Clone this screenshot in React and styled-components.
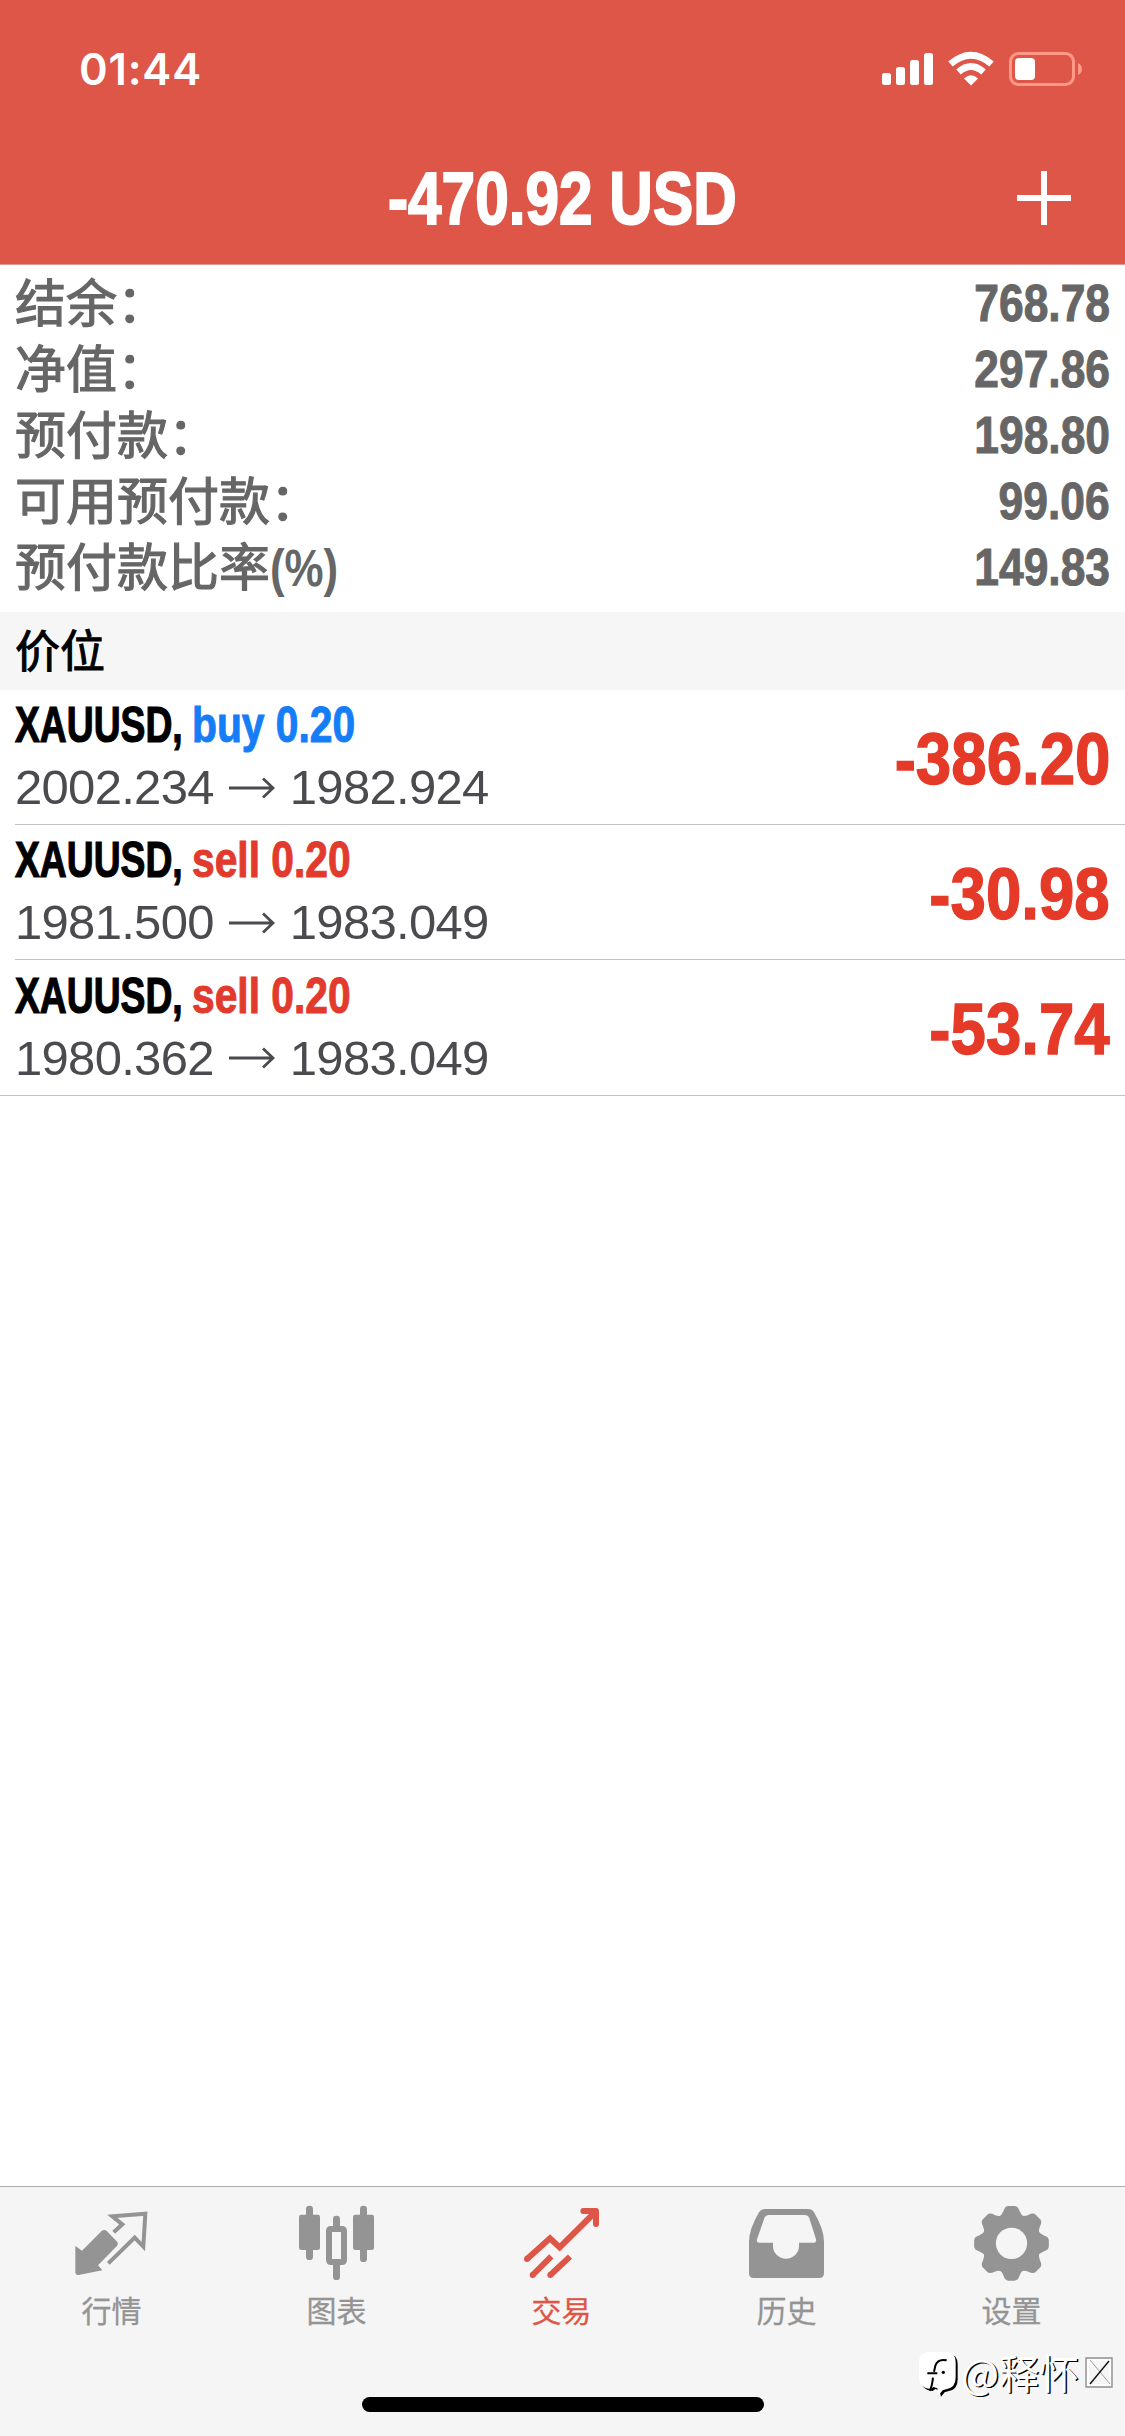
import React from "react";
import styled, { createGlobalStyle } from "styled-components";

const GlobalStyle = createGlobalStyle`
    body {
        margin: 0;
        background-color: #fff;
    }
    * {
        box-sizing: border-box;
    }
`;

const sans = `"Liberation Sans", "Noto Sans CJK SC", sans-serif`;

const Screen = styled.div`
    display: flex;
    flex-direction: column;
    position: relative;
    width: 1125px;
    height: 2436px;
    overflow: hidden;
    background-color: #fff;
    font-family: ${sans};
`;

const Header = styled.header`
    display: flex;
    flex-direction: column;
    height: 265px;
    background-color: #dd5648;
    border-bottom: 1px solid #dc9a96;
    color: #fff;
`;

const StatusBar = styled.div`
    display: flex;
    justify-content: space-between;
    align-items: center;
    height: 138px;
    padding: 0 42px 0 79px;
`;

const Time = styled.span`
    font-family: Inter, sans-serif;
    font-size: 43.5px;
    font-weight: 600;
    line-height: 60px;
    letter-spacing: 0.8px;
`;

const StatusIcons = styled.svg`
    width: 202px;
    height: 38px;
`;

const TitleBar = styled.div`
    display: grid;
    grid-template-columns: 1fr auto 1fr;
    align-items: center;
    height: 120px;
    padding: 0 54px;
`;

// horizontally squeezed text, stands in for a condensed face
const Condensed = styled.span`
    display: inline-block;
    font-weight: 700;
    white-space: nowrap;
    transform: scaleX(${(props) => props.$scale});
    transform-origin: ${(props) => props.$origin || "left"} center;
    -webkit-text-stroke: ${(props) => props.$stroke || "1px"} currentColor;
`;

const Title = styled(Condensed)`
    grid-column: 2;
    padding-top: 2px;
    font-size: 74.5px;
    line-height: 86px;
`;

const PlusIcon = styled.svg`
    justify-self: end;
    width: 54px;
    height: 54px;
`;

const Summary = styled.section`
    display: flex;
    flex-direction: column;
    height: 347px;
    padding: 6px 15px 0;
    color: #666;
`;

const SummaryRow = styled.div`
    display: flex;
    justify-content: space-between;
    align-items: center;
    height: 66px;
`;

const Label = styled.span`
    padding-top: 2px;
    font-size: 51px;
    line-height: 66px;
    white-space: nowrap;
    -webkit-text-stroke: 1.2px currentColor;
`;

const Amount = styled(Condensed)`
    font-size: 51px;
    line-height: 66px;
`;

const SectionTitle = styled.div`
    display: flex;
    align-items: center;
    height: 78px;
    padding: 4px 15px 0;
    background-color: #f6f6f6;
    color: #000;
    font-size: 45px;
    line-height: 74px;
    -webkit-text-stroke: 1px currentColor;
`;

const Positions = styled.div`
    display: flex;
    flex-direction: column;
    border-bottom: 1px solid #c2c2c5;
`;

const Position = styled.div`
    display: flex;
    justify-content: space-between;
    align-items: center;
    height: 135px;
    margin-left: 15px;
    padding-right: 15px;
    border-bottom: ${(props) => (props.$last ? "none" : "1px solid #c2c2c5")};
`;

const Details = styled.div`
    display: flex;
    flex-direction: column;
`;

const Deal = styled.div`
    display: flex;
    height: 63px;
    font-size: 50px;
    line-height: 62px;
`;

const Symbol = styled.div`
    width: 177px;
    color: #000;
`;

const Side = styled.div`
    color: ${(props) => (props.$side === "buy" ? "#157df6" : "#e23a2c")};
`;

const Prices = styled.div`
    display: flex;
    align-items: center;
    height: 63px;
    padding-bottom: 2px;
    color: #4b4b4f;
    font-size: 49px;
    line-height: 61px;
    letter-spacing: -0.7px;
`;

const Arrow = styled.svg`
    width: 46px;
    height: 22px;
    margin: 0 15px 0 15px;
`;

const Profit = styled(Condensed)`
    padding-top: 3px;
    color: #e63a29;
    font-size: 71.5px;
    line-height: 80px;
`;

const Spacer = styled.div`
    flex: 1;
`;

const TabBar = styled.nav`
    display: flex;
    height: 250px;
    border-top: 1px solid #adadad;
    background-color: #f5f5f5;
`;

const Tab = styled.div`
    display: flex;
    flex: 1;
    flex-direction: column;
    align-items: center;
    padding-top: 19px;
    color: ${(props) => (props.$active ? "#dd5648" : "#949494")};
`;

const TabIcon = styled.svg`
    width: 75px;
    height: 75px;
    overflow: visible;
`;

const TabLabel = styled.span`
    margin-top: 8px;
    padding-right: 2px;
    font-size: 30px;
    line-height: 46px;
    -webkit-text-stroke: 0.3px currentColor;
`;

const HomeIndicator = styled.div`
    position: absolute;
    left: 362px;
    bottom: 24px;
    width: 402px;
    height: 15px;
    border-radius: 8px;
    background-color: #000;
`;

const Watermark = styled.div`
    position: absolute;
    right: 10px;
    bottom: 36px;
    display: flex;
    align-items: center;
    height: 50px;
    color: #fff;
    font-family: "Noto Sans CJK SC", sans-serif;
    font-size: 40px;
    line-height: 50px;
    text-shadow: 1.5px 1px 0 #000;
`;

const WatermarkText = styled.span`
    padding-bottom: 6px;
`;

const WatermarkLogo = styled.svg`
    width: 44px;
    height: 48px;
    margin-right: -1px;
`;

const MissingGlyph = styled.svg`
    width: 31px;
    height: 34px;
    margin: 0 0 4px 5px;
`;

const summary = [
    { label: "结余：", value: "768.78" },
    { label: "净值：", value: "297.86" },
    { label: "预付款：", value: "198.80" },
    { label: "可用预付款：", value: "99.06" },
    { label: "预付款比率", suffix: "(%)", value: "149.83" },
];

const positions = [
    { side: "buy", open: "2002.234", current: "1982.924", profit: "-386.20" },
    { side: "sell", open: "1981.500", current: "1983.049", profit: "-30.98" },
    { side: "sell", open: "1980.362", current: "1983.049", profit: "-53.74" },
];

const QuotesIcon = () => (
    <TabIcon viewBox="225 108 225 225" fill="currentColor">
        <path d="M226 228 L246 242 L305 183 Q313 177 321 184 L350 214 Q357 221 350 229 L294 286 L307 301 L236 315 Q226 316 226 306 Z" />
        <path
            d="M341 187 L367 163 L337 139 L436 131 L430 230 L404 203 L325 280"
            fill="none"
            stroke="currentColor"
            strokeWidth="12"
        />
    </TabIcon>
);

const ChartIcon = () => (
    <TabIcon viewBox="900 108 225 225" fill="currentColor">
        <rect x="918" y="107" width="21" height="163" rx="10" />
        <rect x="897" y="134" width="63" height="106" rx="7" />
        <rect x="999" y="137" width="21" height="50" rx="10" />
        <rect x="999" y="262" width="21" height="68" rx="10" />
        <rect
            x="987"
            y="177"
            width="45"
            height="99"
            rx="5"
            fill="#f5f5f5"
            stroke="currentColor"
            strokeWidth="18"
        />
        <rect x="1080" y="107" width="21" height="169" rx="10" />
        <rect x="1059" y="134" width="63" height="106" rx="7" />
    </TabIcon>
);

const TradeIcon = () => (
    <TabIcon
        viewBox="315 108 225 225"
        fill="none"
        stroke="currentColor"
        strokeWidth="18"
    >
        <path d="M321 267 L390 205 L419 232 L526 126" />
        <path
            d="M490 123 H528 V162"
            strokeLinecap="round"
            strokeLinejoin="round"
        />
        <path d="M338 315 L394 259 M391 315 L450 260" />
        <g fill="currentColor" stroke="none">
            <circle cx="321" cy="267" r="9" />
            <circle cx="338" cy="315" r="9" />
            <circle cx="391" cy="315" r="9" />
        </g>
    </TabIcon>
);

const HistoryIcon = () => (
    <TabIcon viewBox="990 108 225 225" fill="currentColor">
        <path
            fillRule="evenodd"
            d="M1035 117 H1164 Q1176 117 1182 127 Q1212 178 1212 215 V310 Q1212 324 1198 324 H1001 Q987 324 987 310 V215 Q987 178 1017 127 Q1023 117 1035 117 Z
            M1047 135 Q1037 135 1033 145 L1011 208 Q1009 218 1018 218 H1059 V228 A39 38 0 0 0 1137 228 V218 H1181 Q1190 218 1188 208 L1168 145 Q1164 135 1154 135 Z"
        />
    </TabIcon>
);

const SettingsIcon = () => (
    <TabIcon viewBox="450 108 225 225">
        <g fill="currentColor">
            <circle cx="559.5" cy="220" r="89" />
            {[0, 45, 90, 135, 180, 225, 270, 315].map((angle) => (
                <path
                    key={angle}
                    transform={`rotate(${angle} 559.5 220)`}
                    d="M519 142 Q531 136 535 124 Q540 108 550 108 H569 Q579 108 584 124 Q588 136 600 142 Z"
                />
            ))}
        </g>
        <circle cx="559.5" cy="220" r="47" fill="#f5f5f5" />
    </TabIcon>
);

const tabs = [
    { label: "行情", icon: QuotesIcon },
    { label: "图表", icon: ChartIcon },
    { label: "交易", icon: TradeIcon, active: true },
    { label: "历史", icon: HistoryIcon },
    { label: "设置", icon: SettingsIcon },
];

const bubble =
    "M54 41 H106 Q135 41 135 72 V118 Q135 148 106 153 L96 156 L85 169 L80 150 L68 146 L60 152 Q25 148 25 118 V72 Q25 41 54 41 Z";

const App = () => {
    return (
        <>
            <GlobalStyle />
            <Screen>
                <Header>
                    <StatusBar>
                        <Time>01:44</Time>
                        <StatusIcons viewBox="881 50 202 38" fill="#fff">
                            <rect x="882" y="73" width="9" height="12" rx="2.5" />
                            <rect x="896" y="67" width="9" height="18" rx="2.5" />
                            <rect x="910" y="60" width="9" height="25" rx="2.5" />
                            <rect x="924" y="53" width="9" height="32" rx="2.5" />
                            <path d="M964 78.5 Q971 72 978 78.5 L971 85.5 Z" />
                            <path
                                d="M950.5 64 Q971 46.5 991.5 64 M958.5 72 Q971 61 983.5 72"
                                fill="none"
                                stroke="#fff"
                                strokeWidth="6.8"
                            />
                            <rect
                                x="1010.5"
                                y="53.5"
                                width="63"
                                height="31"
                                rx="8"
                                fill="none"
                                stroke="#ff9887"
                                strokeWidth="3"
                            />
                            <rect x="1015" y="58" width="20" height="22" rx="4" />
                            <path d="M1078 63 Q1082 65 1082 69 Q1082 73 1078 75 Z" fill="#ff9887" />
                        </StatusIcons>
                    </StatusBar>
                    <TitleBar>
                        <Title $scale={0.81} $origin="center" $stroke="2px">
                            -470.92 USD
                        </Title>
                        <PlusIcon viewBox="0 0 54 54" stroke="#fff" strokeWidth="6">
                            <path d="M0 27 H54 M27 0 V54" />
                        </PlusIcon>
                    </TitleBar>
                </Header>
                <Summary>
                    {summary.map(({ label, suffix, value }) => (
                        <SummaryRow key={label}>
                            <Label>
                                {label}
                                {suffix && (
                                    <Condensed $scale={0.86} $stroke="0">
                                        {suffix}
                                    </Condensed>
                                )}
                            </Label>
                            <Amount $scale={0.87} $origin="right">
                                {value}
                            </Amount>
                        </SummaryRow>
                    ))}
                </Summary>
                <SectionTitle>价位</SectionTitle>
                <Positions>
                    {positions.map(({ side, open, current, profit }, index) => (
                        <Position key={open} $last={index === positions.length - 1}>
                            <Details>
                                <Deal>
                                    <Symbol>
                                        <Condensed $scale={0.745} $stroke="1.2px">
                                            XAUUSD,
                                        </Condensed>
                                    </Symbol>
                                    <Side $side={side}>
                                        <Condensed $scale={0.815}>{side} 0.20</Condensed>
                                    </Side>
                                </Deal>
                                <Prices>
                                    {open}
                                    <Arrow
                                        viewBox="0 0 46 22"
                                        fill="none"
                                        stroke="currentColor"
                                        strokeWidth="2.8"
                                    >
                                        <path d="M0 11 H44 M34 1.5 L44 11 L34 20.5" />
                                    </Arrow>
                                    {current}
                                </Prices>
                            </Details>
                            <Profit $scale={0.89} $origin="right" $stroke="1.4px">
                                {profit}
                            </Profit>
                        </Position>
                    ))}
                </Positions>
                <Spacer />
                <TabBar>
                    {tabs.map(({ label, icon: Icon, active }) => (
                        <Tab key={label} $active={active}>
                            <Icon />
                            <TabLabel>{label}</TabLabel>
                        </Tab>
                    ))}
                </TabBar>
                <HomeIndicator />
                <Watermark>
                    <WatermarkLogo viewBox="22 38 132 144">
                        <path d={bubble} transform="translate(6 6)" fill="#000" />
                        <path d={bubble} fill="#fff" />
                        <path
                            d="M108 66 Q82 60 74 82 L70 100 M50 105 H80 M67 118 Q64 146 57 157"
                            fill="none"
                            stroke="#000"
                            strokeWidth="6"
                        />
                        <circle cx="98" cy="102" r="5" fill="#000" />
                    </WatermarkLogo>
                    <WatermarkText>@释怀</WatermarkText>
                    <MissingGlyph viewBox="0 0 31 34" fill="none">
                        <path d="M2 2 H28 V31 H2 Z" stroke="#8f8f8f" strokeWidth="1.4" />
                        <path d="M4 4 H26 V29 H4 Z M5 5 L25 28" stroke="#fff" strokeWidth="1.6" />
                        <path d="M6 4 L26 28" stroke="#999" />
                        <path d="M25 5 L6 28" stroke="#111" strokeWidth="1.4" />
                    </MissingGlyph>
                </Watermark>
            </Screen>
        </>
    );
};

export default App;
